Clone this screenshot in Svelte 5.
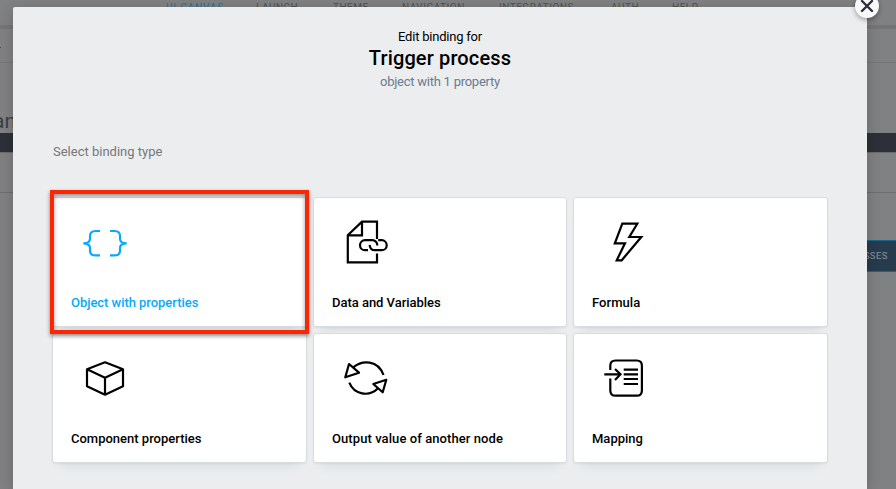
<script>
  const tabs = [
    { label: 'UI CANVAS', width: 58, gap: 32, active: true },
    { label: 'LAUNCH', width: 44, gap: 33 },
    { label: 'THEME', width: 37, gap: 32 },
    { label: 'NAVIGATION', width: 65, gap: 32 },
    { label: 'INTEGRATIONS', width: 79, gap: 33 },
    { label: 'AUTH', width: 29, gap: 32 },
    { label: 'HELP', width: 28, gap: 0 }
  ];
  const options = [
    { label: 'Object with properties', icon: 'object', spacing: -0.04, selected: true },
    { label: 'Data and Variables', icon: 'data', spacing: -0.03 },
    { label: 'Formula', icon: 'formula', spacing: 0.05 },
    { label: 'Component properties', icon: 'component', spacing: 0 },
    { label: 'Output value of another node', icon: 'output', spacing: 0.08 },
    { label: 'Mapping', icon: 'mapping', spacing: 0 }
  ];
</script>

<div class="page">
  <div class="backdrop">
    <nav>
      {#each tabs as tab}
        <span class:active={tab.active} style="width:{tab.width}px;margin-right:{tab.gap}px">{tab.label}</span>
      {/each}
    </nav>
    <div class="toolbar"><i></i></div>
    <div class="title">an</div>
    <div class="dark"></div>
    <div class="strip"></div>
    <div class="canvas"><div class="process">PROCESSES</div></div>
  </div>

  <section class="modal">
    <header>
      <div class="kicker">Edit binding for</div>
      <h1>Trigger process</h1>
      <div class="type">object with 1 property</div>
    </header>
    <p class="hint">Select binding type</p>
    <div class="grid">
      {#each options as option}
        <div class="card" class:selected={option.selected}>
          <svg viewBox="0 0 60 60" width="60" height="60" fill="none" stroke="currentColor" stroke-width="2.2">
            {#if option.icon === 'object'}
              <path d="M25 16h-4.5q-5.5 0-5.5 5.2v2.5q0 4.6-6.7 4.6q6.700 0 6.700 4.600v2.500q0 5 5.500 5H25M35 16h4.500q5.500 0 5.500 5.200v2.500q0 4.600 6.700 4.600q-6.700 0-6.700 4.600v2.500q0 5-5.500 5H35" />
            {:else if option.icon === 'data'}
              <path d="M41 24V6.7H26L11.8 20.3v27H41V38.5M26 6.7v13.6H11.8" />
              <path d="M32 35.2h-3a5 5 0 0 1 0-10h7.3a5 5 0 0 1 5 5.3M33.7 29.9a5 5 0 0 0 5 5.3h7a5 5 0 0 0 0-10h-3.5" />
            {:else if option.icon === 'formula'}
              <path d="M26.3 8.7h15L33.3 22h12L25.7 45.3h-5L29 28.3H18.8Z" />
            {:else if option.icon === 'component'}
              <path d="M30 11.3l18 7v17l-18 8.4-18-8.4v-17ZM12 18.3l18 8.4 18-8.4M30 26.7v17" stroke-linejoin="round" />
            {:else if option.icon === 'output'}
              <path d="M17.5 16.2C26 9 42 8.5 47.5 24M13.3 31.7C18 43.5 33 46.5 42 37.3M13 13l10 8.7-13.7 4.6ZM50.3 28.7l-13 4.3 9.4 8.3Z" stroke-linejoin="round" />
            {:else}
              <path d="M14.3 19v-4.2q0-5.3 5.3-5.3h21q5.3 0 5.3 5.3v24.6q0 5.3-5.3 5.3h-21q-5.3 0-5.3-5.3V27.5" />
              <path d="M8.3 23.3h16M19 18l5.5 5.3L19 29M27.700 18.700H42M27.700 23.300H42M27.700 28H42M27.700 33H42" />
            {/if}
          </svg>
          <span class="label" style="letter-spacing:{option.spacing}px">{option.label}</span>
        </div>
      {/each}
    </div>
  </section>

  <div class="highlight"></div>
  <div class="close">
    <svg width="24" height="24" viewBox="0 0 24 24" stroke="#28313d" stroke-width="2.4" stroke-linecap="round"><path d="M7 7l10 10M17 7L7 17" /></svg>
  </div>
</div>

<style>
  .page { position: relative; width: 896px; height: 489px; overflow: hidden; background: #808182; font-family: Roboto, "Liberation Sans", sans-serif; box-sizing: border-box; padding: 7px 29px 0 13px; }
  .backdrop { position: absolute; inset: 0; }
  nav { display: flex; height: 24px; padding-top: 1px; padding-left: 166px; font-size: 10px; line-height: 13px; color: #505254; border-bottom: 4px solid #747577; }
  nav span { white-space: nowrap; letter-spacing: 0.5px; flex: none; }
  nav .active { color: #217497; letter-spacing: 0.85px; }
  .toolbar { height: 34px; padding-top: 18px; box-sizing: border-box; border-bottom: 1px solid #747577; }
  .toolbar i { display: block; width: 1px; height: 1px; background: #4b4c4e; }
  .title { height: 70px; box-sizing: border-box; padding-top: 46px; margin-left: -7px; font-size: 21px; line-height: 25px; color: #3c3e42; }
  .dark { height: 19px; background: #2d3038; border-bottom: 1px solid #6a6b6d; }
  .strip { height: 39px; border-bottom: 1px solid #6d6e70; }
  .canvas { padding-top: 47px; display: flex; justify-content: flex-end; }
  .process { width: 100px; height: 32px; box-sizing: border-box; padding-right: 8px; background: #273b4e; border: solid #1c6586; border-width: 1px 0; color: #8b9196; text-align: right; font-size: 9.5px; line-height: 30px; letter-spacing: 0.5px; }
  .modal { position: relative; box-sizing: border-box; width: 854px; height: 484px; padding: 21px 39px 0; background: #ebedef; border-radius: 2px 2px 0 0; box-shadow: 0 3px 14px #0003; }
  header { text-align: center; color: #000; }
  .kicker { font-size: 13px; line-height: 18px; letter-spacing: -0.22px; }
  h1 { margin: 0; font-size: 20px; line-height: 24px; font-weight: 500; letter-spacing: 0.14px; }
  .type { margin-top: 2px; font-size: 13px; line-height: 20px; letter-spacing: -0.25px; color: #6c7a93; }
  .hint { margin: 51px 0 0 1px; height: 54px; font-size: 13px; line-height: 18px; color: #76787b; }
  .grid { display: grid; grid-template-columns: 255px 254px 255px; grid-auto-rows: 130px; column-gap: 6px; row-gap: 6px; }
  .card { box-sizing: border-box; border: 1px solid #d9dcdf; border-radius: 3px; background: #fff; display: flex; flex-direction: column; padding: 17px 18px 0; box-shadow: 0 10px 10px -9px #75839138, 0 1px 2px #0000000d; color: #000; }
  .card svg { margin-left: 4px; flex: none; }
  .label { margin-top: 18px; font-size: 13px; line-height: 20px; font-weight: 500; white-space: nowrap; }
  .selected { color: #0aa9fa; }
  .highlight { position: absolute; left: 50px; top: 190px; width: 251px; height: 136px; border: 4px solid #fc2605; box-shadow: 0 2px 4px #0007, inset 0 2px 4px #0006; }
  .close { position: absolute; left: 855px; top: -6px; width: 24px; height: 24px; border-radius: 50%; background: #fafafa; box-shadow: 0 2px 5px #0005; }
  .close svg { display: block; }
</style>
